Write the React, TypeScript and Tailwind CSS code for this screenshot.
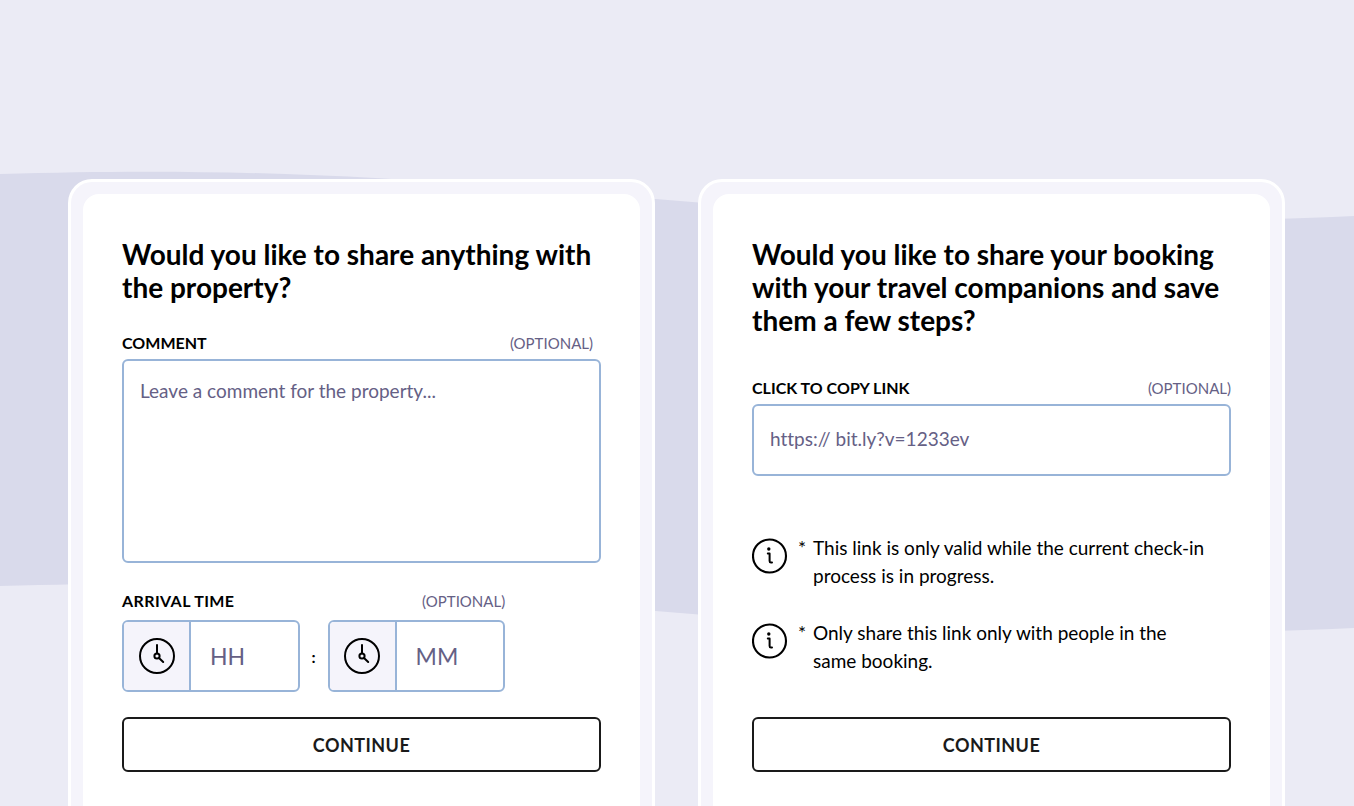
import { useState, type ReactNode } from "react";

const RULES = [
  "This link is only valid while the current check-in process is in progress.",
  "Only share this link only with people in the same booking.",
];

function ClockIcon() {
  return (
    <svg width="36" height="36" viewBox="0 0 36 36" fill="none" stroke="black">
      <circle cx="18" cy="18" r="17" strokeWidth="2" />
      <path d="M18 7v8.2M20 20l4.2 4" strokeWidth="2" strokeLinecap="round" />
      <circle cx="18" cy="18" r="2.6" strokeWidth="2" />
    </svg>
  );
}

function InfoIcon() {
  return (
    <svg
      className="shrink-0"
      width="36"
      height="36"
      viewBox="0 0 36 36"
      fill="none"
      stroke="black"
    >
      <circle cx="17.5" cy="18" r="16.5" strokeWidth="2.1" />
      <circle cx="16.8" cy="11" r="1.7" fill="black" stroke="none" />
      <path
        d="M15.8 15.6h1.8v7.4c0 1 .5 1.5 1.4 1.5h1"
        strokeWidth="2"
        strokeLinecap="round"
        strokeLinejoin="round"
      />
    </svg>
  );
}

function Waves() {
  return (
    <svg
      className="absolute inset-x-0 top-0 h-[806px] w-full"
      viewBox="0 0 1354 806"
      preserveAspectRatio="none"
      aria-hidden="true"
    >
      <path
        d="M0 174C200 168 340 174 520 188C760 207 1000 232 1354 216V628C1000 644 760 619 520 600C340 586 200 580 0 586Z"
        fill="#d9daeb"
      />
    </svg>
  );
}

function Card({ title, children }: { title: string; children: ReactNode }) {
  return (
    <section className="flex flex-1 flex-col rounded-t-3xl border-[3px] border-b-0 border-white bg-[#f5f4fb] px-3 pt-3">
      <div className="flex-1 rounded-t-2xl bg-white px-[39px] pt-11 pb-9">
        <h2 className="text-[28px] leading-[33px] font-bold">{title}</h2>
        {children}
      </div>
    </section>
  );
}

type FieldLabelProps = {
  htmlFor: string;
  text: string;
  className?: string;
};

function FieldLabel({ htmlFor, text, className = "" }: FieldLabelProps) {
  return (
    <div className="flex items-center justify-between leading-5">
      <label
        htmlFor={htmlFor}
        className={`text-base leading-5 font-bold ${className}`}
      >
        {text}
      </label>
      <span className="text-[15px] text-[#656085]">(OPTIONAL)</span>
    </div>
  );
}

type TimeBoxProps = {
  id: string;
  label: string;
  placeholder: string;
  value: string;
  onChange: (value: string) => void;
};

function TimeBox({ id, label, placeholder, value, onChange }: TimeBoxProps) {
  return (
    <div className="flex h-18 min-w-0 flex-1 overflow-hidden rounded-md border-2 border-[#98b4d8]">
      <span className="flex w-[67px] shrink-0 items-center justify-center border-r-2 border-[#98b4d8] bg-[#f5f4fb]">
        <ClockIcon />
      </span>
      <input
        id={id}
        aria-label={label}
        inputMode="numeric"
        maxLength={2}
        placeholder={placeholder}
        value={value}
        onChange={(e) => onChange(e.target.value)}
        className="w-full min-w-0 px-[19px] text-[23px] outline-none placeholder:text-[#656085]"
      />
    </div>
  );
}

function ContinueButton() {
  return (
    <button
      type="button"
      className="h-[55px] w-full cursor-pointer rounded-md border-2 border-[#1a1a1a] text-lg leading-6 font-bold tracking-wide text-[#1a1a1a]"
    >
      CONTINUE
    </button>
  );
}

export default function App() {
  const [comment, setComment] = useState("");
  const [hours, setHours] = useState("");
  const [minutes, setMinutes] = useState("");

  return (
    <div className="relative flex min-h-screen flex-col bg-[#ebebf5] font-['Lato',sans-serif] text-black [font-variant-ligatures:none]">
      <Waves />
      <main className="relative flex flex-1 gap-[43px] pt-[179px] pr-[69px] pl-[68px]">
        <Card title="Would you like to share anything with the property?">
          <div className="mt-[29px] pr-2">
            <FieldLabel htmlFor="comment" text="COMMENT" />
          </div>
          <textarea
            id="comment"
            placeholder="Leave a comment for the property..."
            value={comment}
            onChange={(e) => setComment(e.target.value)}
            className="mt-1.5 block h-[204px] w-full resize-none rounded-md border-2 border-[#98b4d8] px-4 py-[18px] text-[19px] leading-6 outline-none placeholder:text-[#656085]"
          />
          <div className="mt-7 w-4/5">
            <FieldLabel
              htmlFor="hours"
              text="ARRIVAL TIME"
              className="tracking-wide"
            />
            <div className="mt-[9px] flex items-center">
              <TimeBox
                id="hours"
                label="Hours"
                placeholder="HH"
                value={hours}
                onChange={setHours}
              />
              <span className="w-7 pt-0.5 text-center text-base font-bold">
                :
              </span>
              <TimeBox
                id="minutes"
                label="Minutes"
                placeholder="MM"
                value={minutes}
                onChange={setMinutes}
              />
            </div>
          </div>
          <div className="mt-[25px]">
            <ContinueButton />
          </div>
        </Card>

        <Card title="Would you like to share your booking with your travel companions and save them a few steps?">
          <div className="mt-[41px]">
            <FieldLabel htmlFor="link" text="CLICK TO COPY LINK" />
          </div>
          <input
            id="link"
            readOnly
            value="https:// bit.ly?v=1233ev"
            className="mt-1.5 block h-18 w-full rounded-md border-2 border-[#98b4d8] px-4 pb-1 text-[19px] text-[#656085] outline-none"
          />
          <ul className="mt-[58px] space-y-[29px]">
            {RULES.map((rule) => (
              <li key={rule} className="flex text-[19px] leading-7">
                <span className="mt-1">
                  <InfoIcon />
                </span>
                <span className="w-[25px] shrink-0 pl-2.5">*</span>
                <p className="pr-5">{rule}</p>
              </li>
            ))}
          </ul>
          <div className="mt-[42px]">
            <ContinueButton />
          </div>
        </Card>
      </main>
    </div>
  );
}
